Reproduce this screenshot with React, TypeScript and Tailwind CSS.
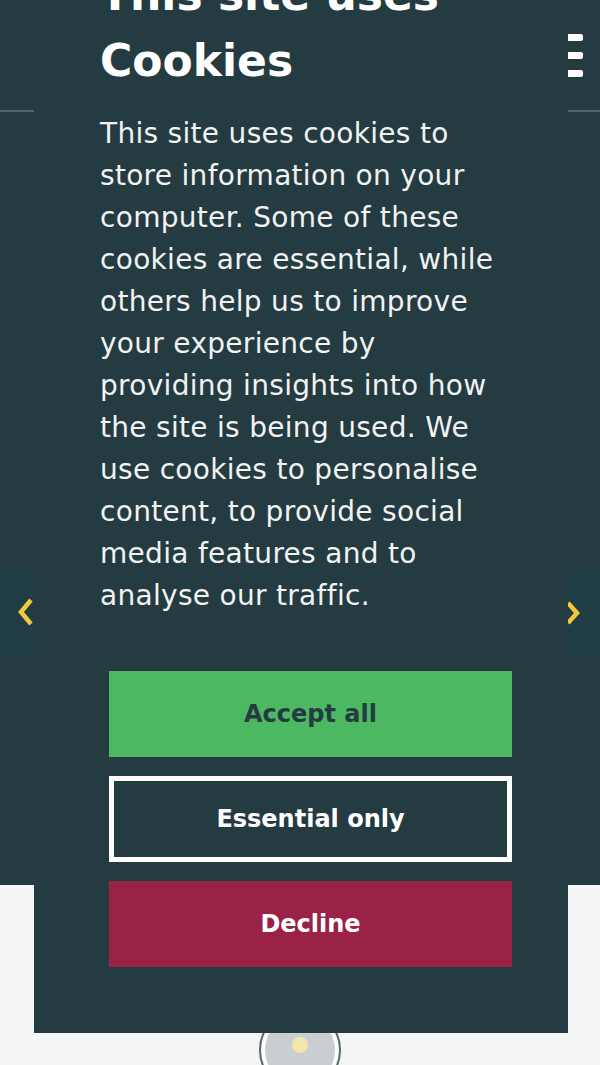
import React from "react";

const lines = [
  "This site uses cookies to",
  "store information on your",
  "computer. Some of these",
  "cookies are essential, while",
  "others help us to improve",
  "your experience by",
  "providing insights into how",
  "the site is being used. We",
  "use cookies to personalise",
  "content, to provide social",
  "media features and to",
  "analyse our traffic.",
];

export default function App() {
  return (
    <div
      className="relative w-[600px] h-[1065px] overflow-hidden bg-[#f5f5f5]"
      style={{ fontFamily: '"DejaVu Sans", "Noto Sans", sans-serif' }}
    >
      {/* dark page section */}
      <div className="h-[885px] bg-[#233b41] flex flex-col">
        <header className="h-[112px] border-b-2 border-[#4f6468] flex justify-end items-start pt-[34px] pr-[17px]">
          <div className="flex flex-col gap-[11px]">
            <span className="block w-[30px] h-[7px] bg-white rounded-r-[2px]" />
            <span className="block w-[30px] h-[7px] bg-white rounded-r-[2px]" />
            <span className="block w-[30px] h-[7px] bg-white rounded-r-[2px]" />
          </div>
        </header>
        <div className="mt-[458px] flex justify-between">
          <div className="w-[36px] h-[86px] bg-[#203d46] flex items-center justify-end pr-[1px]">
            <svg width="18" height="30" viewBox="0 0 18 30">
              <path d="M14 2 L4 14 L14 26" fill="none" stroke="#f2c83c" strokeWidth="4.5" strokeLinejoin="miter" />
            </svg>
          </div>
          <div className="w-[36px] h-[86px] bg-[#203d46] flex items-center justify-start pl-[1px]">
            <svg width="18" height="30" viewBox="0 0 18 30">
              <path d="M3 5 L12 15 L3 25" fill="none" stroke="#f2c83c" strokeWidth="4.5" strokeLinejoin="miter" />
            </svg>
          </div>
        </div>
      </div>

      {/* light section */}
      <div className="flex justify-center pt-[124px]">
        <div className="w-[82px] h-[82px] rounded-full border-2 border-[#56686c] bg-white flex items-center justify-center">
          <div className="w-[70px] h-[70px] rounded-full bg-[#c9cfd1] flex justify-center pt-[22px]">
            <div className="w-[16px] h-[16px] rounded-full bg-[#f3e7a9]" />
          </div>
        </div>
      </div>

      {/* cookie modal overlay */}
      <div className="absolute left-[34px] top-[-104px] w-[534px] bg-[#233b41] pl-[66px] pr-[56px] pt-[66px] pb-[66px]">
        <h2 className="text-[44px] leading-[66px] font-bold text-white">
          This site uses
          <br />
          Cookies
        </h2>
        <p className="mt-[19px] text-[28px] leading-[42px] tracking-[0.3px] text-[#f2f2f2] whitespace-nowrap">
          {lines.map((l) => (
            <span key={l} className="block">
              {l}
            </span>
          ))}
        </p>
        <div className="mt-[54px] ml-[9px] w-[403px] flex flex-col gap-[19px]">
          <button className="h-[86px] bg-[#4cb862] text-[#233b41] text-[24px] font-bold">
            Accept all
          </button>
          <button className="h-[86px] border-[5px] border-white text-white text-[24px] font-bold">
            Essential only
          </button>
          <button className="h-[86px] bg-[#9a2246] text-white text-[24px] font-bold">
            Decline
          </button>
        </div>
      </div>
    </div>
  );
}
